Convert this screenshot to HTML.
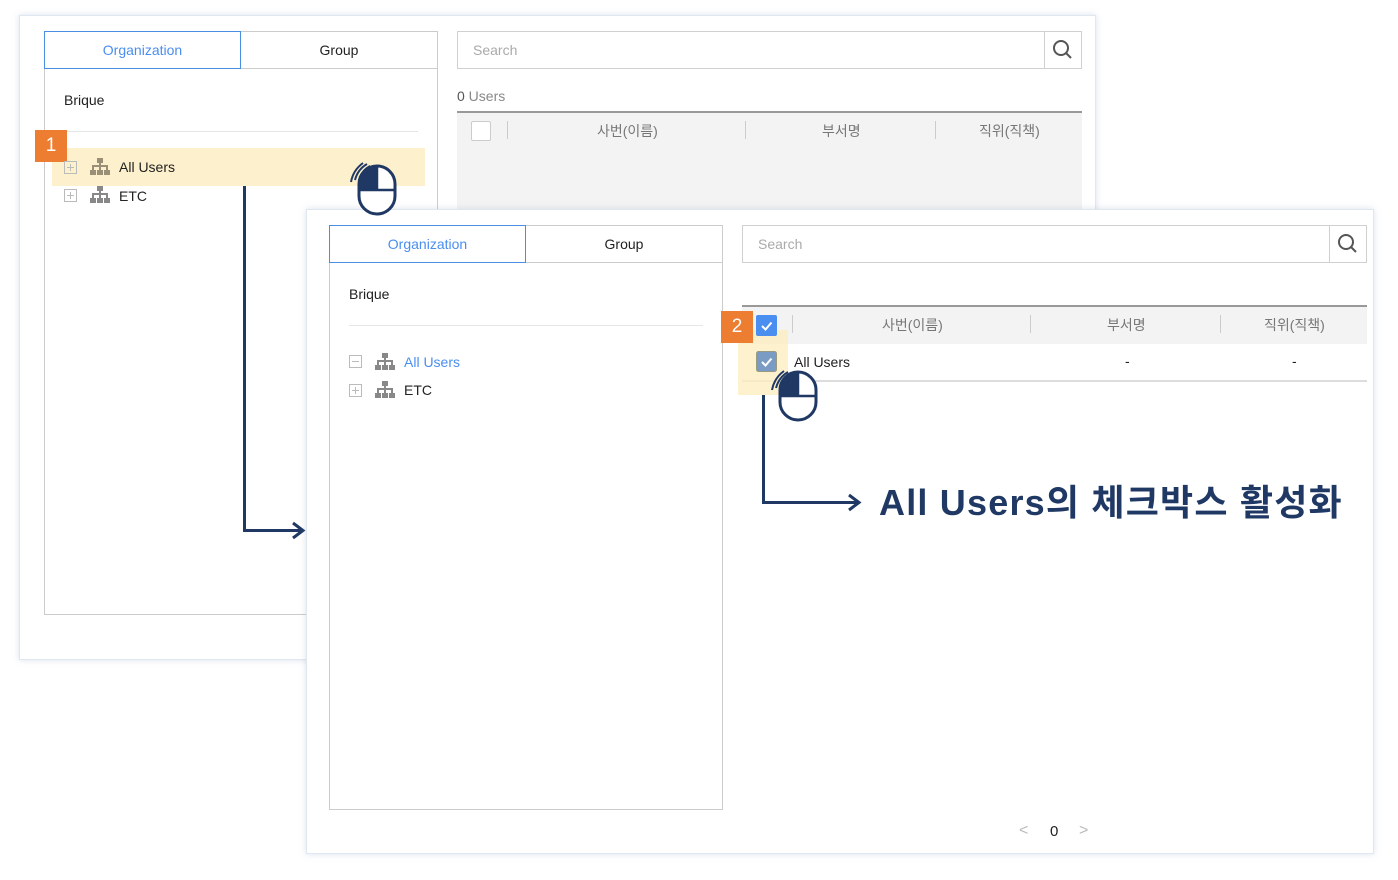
<!DOCTYPE html>
<html><head><meta charset="utf-8"><style>
*{margin:0;padding:0;box-sizing:border-box}
body{width:1398px;height:880px;background:#fff;position:relative;overflow:hidden;font-family:"Liberation Sans","Noto Sans CJK KR",sans-serif;font-size:14px;color:#222}
.a{position:absolute}
.panel{position:absolute;background:#fff;border:1px solid #dfe7f0;box-shadow:0 0 6px rgba(150,170,200,.35)}
.tab{position:absolute;height:38px;border:1px solid #ccc;text-align:center;line-height:36px;font-size:14px}
.tab.on{border-color:#4a90e2;color:#4a8ef0;z-index:2}
.box{position:absolute;border:1px solid #ccc}
.search{position:absolute;height:38px;border:1px solid #d0d0d0;color:#aaa;font-size:14px;line-height:36px;padding-left:15px}
.sbtn{position:absolute;right:-1px;top:-1px;width:38px;height:38px;border:1px solid #d0d0d0;background:#fff}
.hdr{position:absolute;background:#f3f3f3;border-top:2px solid #999;color:#777;font-size:14px}
.hdr span{position:absolute;top:8px}
.sep{position:absolute;top:8px;width:1px;height:18px;background:#ccc}
.plus{position:absolute;width:13px;height:13px;border:1px solid #bbb}
.plus:before{content:"";position:absolute;left:2px;top:5px;width:7px;height:1px;background:#bbb}
.plus.p:after{content:"";position:absolute;left:5px;top:2px;width:1px;height:7px;background:#bbb}
.badge{position:absolute;width:32px;height:32px;background:#ed7d31;color:#fff;font-size:19px;text-align:center;line-height:32px}
</style></head><body>

<div class="panel" style="left:19px;top:15px;width:1077px;height:645px"></div>
<div class="tab on" style="left:44px;top:31px;width:197px">Organization</div>
<div class="tab" style="left:240px;top:31px;width:198px">Group</div>
<div class="box" style="left:44px;top:68px;width:394px;height:547px"></div>
<div class="a" style="left:64px;top:92px;font-size:14px">Brique</div>
<div class="a" style="left:64px;top:131px;width:354px;height:1px;background:#e6e6e6"></div>
<div class="a" style="left:52px;top:148px;width:373px;height:38px;background:#fdf0cc"></div>
<div class="badge" style="left:35px;top:130px">1</div>
<div class="plus p" style="left:64px;top:161px"></div>
<svg class="a" style="left:90px;top:158px" width="20" height="18" viewBox="0 0 20 18"><g fill="#9a9078"><rect x="7" y="0" width="6" height="5"/><rect x="9" y="5" width="2" height="3"/><rect x="2" y="7" width="16" height="2"/><rect x="2" y="9" width="2" height="3"/><rect x="9" y="9" width="2" height="3"/><rect x="16" y="9" width="2" height="3"/><rect x="0" y="12" width="6" height="5"/><rect x="7" y="12" width="6" height="5"/><rect x="14" y="12" width="6" height="5"/></g></svg>
<div class="a" style="left:119px;top:159px">All Users</div>
<div class="plus p" style="left:64px;top:189px"></div>
<svg class="a" style="left:90px;top:186px" width="20" height="18" viewBox="0 0 20 18"><g fill="#888"><rect x="7" y="0" width="6" height="5"/><rect x="9" y="5" width="2" height="3"/><rect x="2" y="7" width="16" height="2"/><rect x="2" y="9" width="2" height="3"/><rect x="9" y="9" width="2" height="3"/><rect x="16" y="9" width="2" height="3"/><rect x="0" y="12" width="6" height="5"/><rect x="7" y="12" width="6" height="5"/><rect x="14" y="12" width="6" height="5"/></g></svg>
<div class="a" style="left:119px;top:188px">ETC</div>

<div class="search" style="left:457px;top:31px;width:625px">Search<div class="sbtn"><svg width="36" height="36" viewBox="0 0 36 36"><circle cx="16" cy="16" r="7" fill="none" stroke="#555" stroke-width="2"/><line x1="21" y1="21" x2="26" y2="26" stroke="#555" stroke-width="2"/></svg></div></div>
<div class="a" style="left:457px;top:88px;color:#888;font-size:14px"><b style="color:#555;font-weight:normal">0</b> Users</div>
<div class="hdr" style="left:457px;top:111px;width:625px;height:99px">
<div class="a" style="left:14px;top:8px;width:20px;height:20px;background:#fff;border:1px solid #ccc;border-radius:2px"></div>
<div class="sep" style="left:50px"></div><span style="left:140px">사번(이름)</span>
<div class="sep" style="left:288px"></div><span style="left:365px">부서명</span>
<div class="sep" style="left:478px"></div><span style="left:522px">직위(직책)</span>
</div>

<div class="a" style="left:243px;top:186px;width:3px;height:345px;background:#1f3864"></div>
<div class="a" style="left:243px;top:529px;width:58px;height:3px;background:#1f3864"></div>
<svg class="a" style="left:290px;top:521px" width="16" height="19"><polyline points="3,2 13,9.5 3,17" fill="none" stroke="#1f3864" stroke-width="3"/></svg>

<div class="panel" style="left:306px;top:209px;width:1068px;height:645px"></div>

<svg class="a" style="left:346px;top:158px;z-index:5" width="56" height="60" viewBox="0 0 56 60"><path d="M14 19 a22 22 0 0 1 10-11" fill="none" stroke="#1f3864" stroke-width="2"/><path d="M9 22 a26 26 0 0 1 12-16" fill="none" stroke="#1f3864" stroke-width="2"/><path d="M5 24 a30 30 0 0 1 12-19" fill="none" stroke="#1f3864" stroke-width="2"/><rect x="13" y="8" width="36" height="48" rx="18" fill="#fff" stroke="#1f3864" stroke-width="3"/><path d="M31 8 a18 18 0 0 0 -18 18 v6 h18z" fill="#1f3864"/><line x1="13" y1="32" x2="49" y2="32" stroke="#1f3864" stroke-width="2.5"/><line x1="31" y1="8" x2="31" y2="32" stroke="#1f3864" stroke-width="2.5"/></svg>

<div class="tab on" style="left:329px;top:225px;width:197px">Organization</div>
<div class="tab" style="left:525px;top:225px;width:198px">Group</div>
<div class="box" style="left:329px;top:262px;width:394px;height:548px"></div>
<div class="a" style="left:349px;top:286px">Brique</div>
<div class="a" style="left:349px;top:325px;width:354px;height:1px;background:#e6e6e6"></div>
<div class="plus" style="left:349px;top:355px"></div>
<svg class="a" style="left:375px;top:353px" width="20" height="18" viewBox="0 0 20 18"><g fill="#888"><rect x="7" y="0" width="6" height="5"/><rect x="9" y="5" width="2" height="3"/><rect x="2" y="7" width="16" height="2"/><rect x="2" y="9" width="2" height="3"/><rect x="9" y="9" width="2" height="3"/><rect x="16" y="9" width="2" height="3"/><rect x="0" y="12" width="6" height="5"/><rect x="7" y="12" width="6" height="5"/><rect x="14" y="12" width="6" height="5"/></g></svg>
<div class="a" style="left:404px;top:354px;color:#4a8ef0">All Users</div>
<div class="plus p" style="left:349px;top:384px"></div>
<svg class="a" style="left:375px;top:381px" width="20" height="18" viewBox="0 0 20 18"><g fill="#888"><rect x="7" y="0" width="6" height="5"/><rect x="9" y="5" width="2" height="3"/><rect x="2" y="7" width="16" height="2"/><rect x="2" y="9" width="2" height="3"/><rect x="9" y="9" width="2" height="3"/><rect x="16" y="9" width="2" height="3"/><rect x="0" y="12" width="6" height="5"/><rect x="7" y="12" width="6" height="5"/><rect x="14" y="12" width="6" height="5"/></g></svg>
<div class="a" style="left:404px;top:382px">ETC</div>

<div class="search" style="left:742px;top:225px;width:625px">Search<div class="sbtn"><svg width="36" height="36" viewBox="0 0 36 36"><circle cx="16" cy="16" r="7" fill="none" stroke="#555" stroke-width="2"/><line x1="21" y1="21" x2="26" y2="26" stroke="#555" stroke-width="2"/></svg></div></div>
<div class="hdr" style="left:742px;top:305px;width:625px;height:39px">
<div class="sep" style="left:50px"></div><span style="left:140px">사번(이름)</span>
<div class="sep" style="left:288px"></div><span style="left:365px">부서명</span>
<div class="sep" style="left:478px"></div><span style="left:522px">직위(직책)</span>
</div>
<div class="a" style="left:742px;top:380px;width:625px;height:2px;background:#ddd"></div>
<div class="a" style="left:738px;top:330px;width:50px;height:65px;background:rgba(253,236,190,.75)"></div>
<svg class="a" style="left:756px;top:315px" width="21" height="21"><rect width="21" height="21" rx="2" fill="#4a8ef0"/><polyline points="6,11 9.5,14.5 15.5,7.5" fill="none" stroke="#fff" stroke-width="2"/></svg>
<svg class="a" style="left:756px;top:351px" width="21" height="21"><rect x="0.5" y="0.5" width="20" height="20" rx="2" fill="#7a9cc4" stroke="#9a9a80"/><polyline points="6,11 9.5,14.5 15.5,7.5" fill="none" stroke="#fff" stroke-width="2"/></svg>
<div class="badge" style="left:721px;top:311px">2</div>
<div class="a" style="left:794px;top:354px">All Users</div>
<div class="a" style="left:1125px;top:353px">-</div>
<div class="a" style="left:1292px;top:353px">-</div>

<div class="a" style="left:1019px;top:822px;color:#bbb;font-size:16px">&lt;</div>
<div class="a" style="left:1050px;top:823px;font-size:15px">0</div>
<div class="a" style="left:1079px;top:822px;color:#bbb;font-size:16px">&gt;</div>

<div class="a" style="left:762px;top:395px;width:3px;height:109px;background:#1f3864"></div>
<div class="a" style="left:762px;top:501px;width:95px;height:3px;background:#1f3864"></div>
<svg class="a" style="left:846px;top:493px" width="16" height="19"><polyline points="3,2 13,9.5 3,17" fill="none" stroke="#1f3864" stroke-width="3"/></svg>
<div class="a" style="left:879px;top:474px;font-size:36px;letter-spacing:1.2px;font-weight:bold;color:#1f3864;white-space:nowrap">All Users의 체크박스 활성화</div>

<svg class="a" style="left:767px;top:366px" width="56" height="60" viewBox="0 0 56 60"><path d="M14 19 a22 22 0 0 1 10-11" fill="none" stroke="#1f3864" stroke-width="2"/><path d="M9 22 a26 26 0 0 1 12-16" fill="none" stroke="#1f3864" stroke-width="2"/><path d="M5 24 a30 30 0 0 1 12-19" fill="none" stroke="#1f3864" stroke-width="2"/><rect x="13" y="6" width="36" height="48" rx="18" fill="#fff" stroke="#1f3864" stroke-width="3"/><path d="M31 6 a18 18 0 0 0 -18 18 v6 h18z" fill="#1f3864"/><line x1="13" y1="30" x2="49" y2="30" stroke="#1f3864" stroke-width="2.5"/><line x1="31" y1="6" x2="31" y2="30" stroke="#1f3864" stroke-width="2.5"/></svg>
</body></html>
